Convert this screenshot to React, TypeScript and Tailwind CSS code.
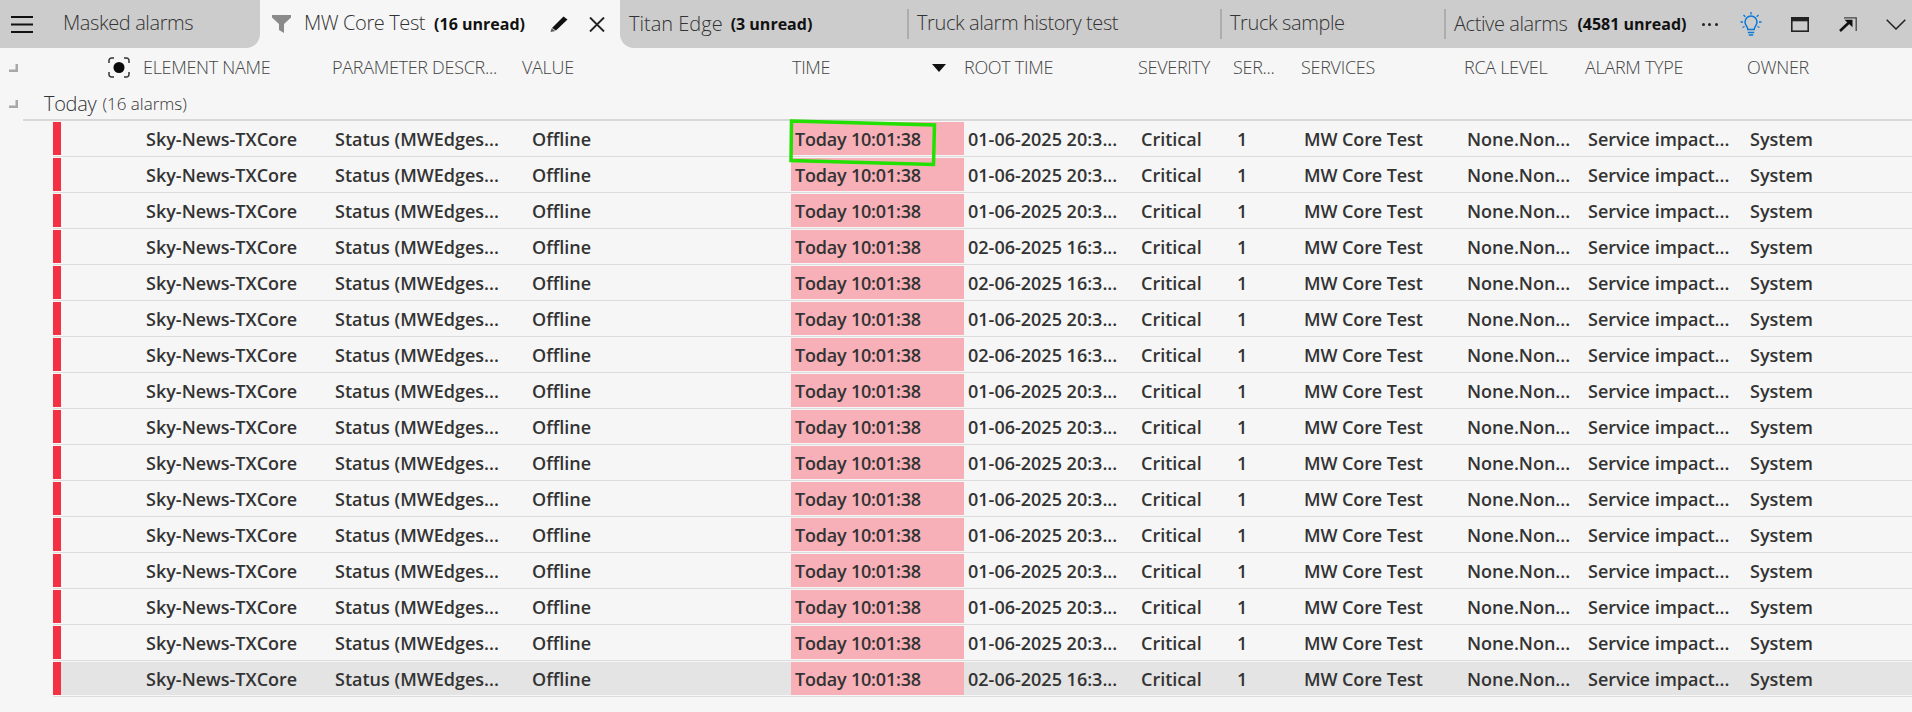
const font = { fontFamily: '"Open Sans", "Noto Sans", sans-serif' };

const headerCols = 'grid grid-cols-[143px_189px_190px_269px_173px_174px_95px_68px_163px_121px_162px_1fr]';
const rowCols = 'grid grid-cols-[8px_82px_189px_190px_269px_173px_174px_95px_68px_163px_121px_162px_1fr]';

const rootDates = ['01', '01', '01', '02', '02', '01', '02', '01', '01', '01', '01', '01', '01', '01', '01', '02'];

function Hamburger() {
  return (
    <svg width="22" height="17" viewBox="0 0 22 17">
      <path d="M0 1h22M0 8.5h22M0 16h22" stroke="#111" strokeWidth="1.8" />
    </svg>
  );
}

function FilterIcon() {
  return (
    <svg width="19" height="18" viewBox="0 0 19 18">
      <path d="M0 0h19v2.5L12 9v9l-5-3V9L0 2.5z" fill="#8a8a8a" />
    </svg>
  );
}

function PencilIcon() {
  return (
    <svg width="18" height="16" viewBox="0 0 18 16">
      <path d="M13.5 0.5l4 3L6 14.5l-4-2.5z" fill="#111" />
      <path d="M1.5 12.5l4 2.5-5 1z" fill="#555" />
    </svg>
  );
}

function CloseIcon() {
  return (
    <svg width="16" height="15" viewBox="0 0 16 15">
      <path d="M1 0.5l14 14M15 0.5l-14 14" stroke="#222" strokeWidth="1.9" />
    </svg>
  );
}

function BulbIcon() {
  return (
    <svg width="22" height="24" viewBox="0 0 22 24" fill="none" stroke="#0a78d4">
      <path d="M11 0v2.5M3.5 3l1.8 1.8M18.5 3l-1.8 1.8M0.5 10H3M19 10h2.5M2.5 15.5l2-1M19.500 15.500l-2-1" strokeWidth="1.3" />
      <path d="M7.800 17.500c0-3-2.800-3.800-2.800-7.500a6 6 0 0 1 12 0c0 3.700-2.800 4.500-2.800 7.500z" strokeWidth="1.500" />
      <path d="M7.800 20.500h6.400M8.800 23h4.400" strokeWidth="1.600" />
    </svg>
  );
}

function WindowIcon() {
  return (
    <svg width="18" height="15" viewBox="0 0 18 15">
      <rect x="0.800" y="0.800" width="16.400" height="13.400" fill="none" stroke="#222" strokeWidth="1.600" />
      <rect x="0.800" y="0.800" width="16.400" height="3.500" fill="#222" />
    </svg>
  );
}

function PopoutIcon() {
  return (
    <svg width="18" height="15" viewBox="0 0 18 15" fill="none">
      <path d="M5 0.800h12.200V14" stroke="#444" strokeWidth="1.300" />
      <path d="M1 14L10 5.500" stroke="#111" strokeWidth="2.600" />
      <path d="M5.500 2.800h8v7.400z" fill="#111" />
    </svg>
  );
}

function ChevronIcon() {
  return (
    <svg width="20" height="11" viewBox="0 0 20 11" fill="none">
      <path d="M0.700 0.700L10 10l9.300-9.300" stroke="#222" strokeWidth="1.500" />
    </svg>
  );
}

function TargetIcon() {
  return (
    <svg width="22" height="21" viewBox="0 0 22 21" fill="none">
      <path d="M1 6V3.500A2.500 2.500 0 0 1 3.500 1H6M16 1h2.500A2.500 2.500 0 0 1 21 3.500V6M21 15v2.500a2.500 2.500 0 0 1-2.500 2.500H16M6 20H3.500A2.500 2.500 0 0 1 1 17.500V15" stroke="#333" strokeWidth="1.500" />
      <circle cx="11" cy="10.500" r="5.500" fill="#0a0a0a" />
    </svg>
  );
}

function CollapseMark() {
  return (
    <svg width="9" height="8" viewBox="0 0 9 8">
      <path d="M9 0v8H0V5.500h6.500V0z" fill="#a8a8a8" />
    </svg>
  );
}

function Separator() {
  return <div className="w-[2px] h-[30px] bg-[#adadad]" />;
}

function TabLabel({ children }: { children: React.ReactNode }) {
  return <span className="text-[20px] font-light leading-none text-[#333] whitespace-nowrap tracking-[-0.4px]">{children}</span>;
}

function Unread({ children }: { children: React.ReactNode }) {
  return <span className="text-[16px] font-bold leading-none text-[#111] whitespace-nowrap">{children}</span>;
}

function TabBar() {
  return (
    <div className="flex h-12 bg-[#f6f6f6]">
      <div className="flex items-center w-[260px] bg-[#cccccc] rounded-br-[14px] pl-[11px]">
        <Hamburger />
        <div className="ml-[30px]">
          <TabLabel>Masked alarms</TabLabel>
        </div>
      </div>
      <div className="flex items-center w-[360px] bg-[#f6f6f6] rounded-t-[12px] pl-[12px]">
        <FilterIcon />
        <div className="ml-[13px] mr-[9px]">
          <TabLabel>MW Core Test</TabLabel>
        </div>
        <Unread>(16 unread)</Unread>
        <div className="ml-[25px]">
          <PencilIcon />
        </div>
        <div className="ml-[21px]">
          <CloseIcon />
        </div>
      </div>
      <div className="flex flex-1 items-center bg-[#cccccc] rounded-bl-[14px]">
        <div className="flex items-center gap-[8px] w-[287px] pl-[9px]">
          <span className="text-[20px] font-light leading-none text-[#333] whitespace-nowrap">Titan Edge</span>
          <Unread>(3 unread)</Unread>
        </div>
        <Separator />
        <div className="w-[311px] pl-[8px]">
          <TabLabel>Truck alarm history test</TabLabel>
        </div>
        <Separator />
        <div className="w-[222px] pl-[8px]">
          <TabLabel>Truck sample</TabLabel>
        </div>
        <Separator />
        <div className="flex items-center pl-[8px]">
          <TabLabel>Active alarms</TabLabel>
          <div className="ml-[10px]">
            <Unread>(4581 unread)</Unread>
          </div>
          <span className="ml-[15px] w-[16px] flex justify-between">
            <i className="w-[3px] h-[3px] rounded-full bg-[#222]" />
            <i className="w-[3px] h-[3px] rounded-full bg-[#222]" />
            <i className="w-[3px] h-[3px] rounded-full bg-[#222]" />
          </span>
          <div className="ml-[22px]">
            <BulbIcon />
          </div>
          <div className="ml-[29px]">
            <WindowIcon />
          </div>
          <div className="ml-[30px]">
            <PopoutIcon />
          </div>
          <div className="ml-[29px]">
            <ChevronIcon />
          </div>
        </div>
      </div>
    </div>
  );
}

function HeaderRow() {
  const labels = ['PARAMETER DESCR...', 'VALUE', 'TIME', 'ROOT TIME', 'SEVERITY', 'SER...', 'SERVICES', 'RCA LEVEL', 'ALARM TYPE', 'OWNER'];
  return (
    <div className={`${headerCols} h-[39px] mb-px items-center text-[18px] font-light text-[#444] tracking-[-0.3px]`}>
      <div className="flex items-center pl-[9px]">
        <CollapseMark />
        <div className="ml-[90px]">
          <TargetIcon />
        </div>
      </div>
      <div>ELEMENT NAME</div>
      {labels.map((label) =>
        label === 'TIME' ? (
          <div key={label} className="flex items-center justify-between pl-px pr-[18px]">
            <span>{label}</span>
            <svg width="14" height="8" viewBox="0 0 14 8">
              <path d="M0 0h14L7 8z" fill="#111" />
            </svg>
          </div>
        ) : (
          <div key={label} className="whitespace-nowrap">
            {label}
          </div>
        ),
      )}
    </div>
  );
}

function GroupRow() {
  return (
    <div className="flex items-center h-[31px] pl-[9px] text-[#333]">
      <CollapseMark />
      <span className="ml-[26px] text-[20px] font-light tracking-[-0.3px]">Today</span>
      <span className="ml-[6px] text-[17px] font-light">(16 alarms)</span>
    </div>
  );
}

function AlarmRow({ date, selected, first }: { date: string; selected: boolean; first: boolean }) {
  return (
    <div className="ml-[53px] pb-px mb-px border-b border-[#dcdcdc]">
      <div className={`${rowCols} h-[33px] items-center text-[18px] font-semibold text-[#333] whitespace-nowrap ${selected ? 'bg-[#e4e4e4]' : ''}`}>
        <div className="h-full bg-[#f43044]" />
        <div />
        <div className="pl-[3px] pt-[2px]">Sky-News-TXCore</div>
        <div className="pl-[3px] pt-[2px]">Status (MWEdges...</div>
        <div className="pl-[10px] pt-[2px]">Offline</div>
        <div className="relative flex items-center h-full pl-[4px] pt-[2px] bg-[#f7b0b8] tracking-[-0.2px]">
          Today 10:01:38
          {first && (
            <svg className="absolute z-10 left-[-4px] top-[-5px]" width="152" height="50" viewBox="0 0 152 50" fill="none">
              <path d="M4.500 4L147.500 8L146.500 47.500L4 43.500Z" stroke="#22e000" strokeWidth="3.500" />
            </svg>
          )}
        </div>
        <div className="pl-[4px] pt-[2px]">{date}-06-2025 {date === '01' ? '20:3...' : '16:3...'}</div>
        <div className="pl-[3px] pt-[2px]">Critical</div>
        <div className="pl-[4px] pt-[2px]">1</div>
        <div className="pl-[3px] pt-[2px] tracking-[-0.1px]">MW Core Test</div>
        <div className="pl-[3px] pt-[2px]">None.Non...</div>
        <div className="pl-[3px] pt-[2px]">Service impact...</div>
        <div className="pl-[3px] pt-[2px]">System</div>
      </div>
    </div>
  );
}

export default function App() {
  return (
    <div className="h-[712px] w-[1912px] overflow-hidden bg-[#f6f6f6]" style={font}>
      <TabBar />
      <HeaderRow />
      <GroupRow />
      <div className="ml-[23px] h-[3px] border-t-2 border-[#d8d8d8]" />
      <div>
        {rootDates.map((date, i) => (
          <AlarmRow key={i} date={date} selected={i === 15} first={i === 0} />
        ))}
      </div>
    </div>
  );
}
